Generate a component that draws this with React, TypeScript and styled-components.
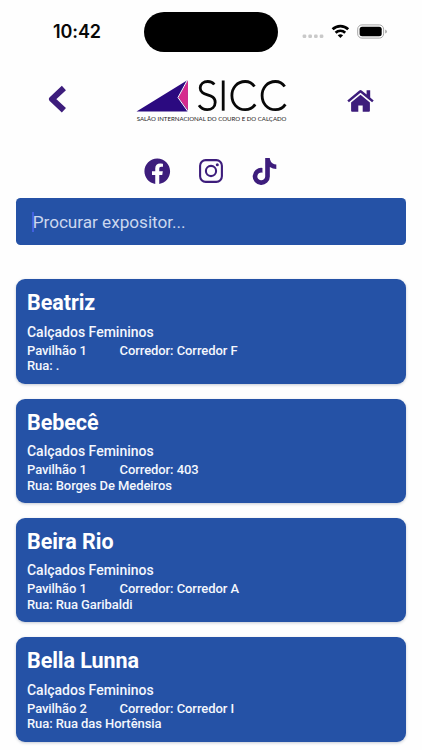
import React from "react";
import styled, { createGlobalStyle } from "styled-components";
import { FaFacebook, FaTiktok } from "react-icons/fa";

const GlobalStyle = createGlobalStyle`
  * { box-sizing: border-box; }
  body { margin: 0; background: #fefefe; overflow: hidden; }
`;

const Screen = styled.div`
  width: 422px;
  height: 750px;
  overflow: hidden;
  background: #fefefe;
  font-family: Roboto, "Liberation Sans", sans-serif;
`;

const StatusBar = styled.header`
  height: 64px;
  display: grid;
  grid-template-columns: 144px 134px 144px;
`;

const Clock = styled.time`
  padding: 21px 0 0 53px;
  font: 600 18px/22px Inter, sans-serif;
  letter-spacing: -0.1px;
  color: #080808;
`;

const Island = styled.div`
  height: 39.5px;
  margin-top: 12.4px;
  border-radius: 20px;
  background: #000;
`;

const StatusIcons = styled.svg`
  width: 144px;
  height: 64px;
  display: block;
`;

const Header = styled.nav`
  height: 72px;
  display: grid;
  grid-template-columns: 136px 152px 1fr;
`;

const NavButton = styled.button<{ $left: number; $top: number }>`
  border: 0;
  background: none;
  padding: ${(p) => p.$top}px 0 0 ${(p) => p.$left}px;
  color: #3d1d7c;
  display: flex;
  align-items: flex-start;
  svg { display: block; flex: none; }
`;

const Logo = styled.svg`
  width: 152px;
  height: 72px;
  display: block;
`;

const Socials = styled.div`
  height: 62.4px;
  padding-top: 21px;
  display: flex;
  justify-content: center;
  color: #3d1d7c;
  a { color: inherit; width: 53.5px; height: 28px; display: flex; align-items: center; justify-content: center; }
`;

const Search = styled.div`
  height: 46.3px;
  margin: 0 16.4px 34.5px 16.2px;
  border-radius: 4.5px;
  background: #2552a6;
  display: flex;
  align-items: center;
  padding-left: 16px;
`;

const Caret = styled.i`
  width: 2px;
  height: 20px;
  margin-right: -1.5px;
  background: #4160e0;
`;

const Placeholder = styled.span`
  font-size: 17.2px;
  line-height: 22px;
  letter-spacing: -0.03px;
  color: #cbd7ee;
`;

const List = styled.main`
  display: flex;
  flex-direction: column;
  gap: 15px;
  padding: 0 16.4px 0 16.2px;
`;

const Card = styled.article`
  height: 104.4px;
  flex: none;
  border-radius: 9px;
  background: #2552a6;
  color: #f4f7fd;
  padding: 11px 10.8px 0;
  box-shadow: 0 1px 3px rgba(30, 50, 90, 0.26);
`;

const Name = styled.h2`
  margin: 0 0 6.5px;
  font-size: 21.5px;
  line-height: 26px;
  font-weight: 700;
  letter-spacing: -0.05px;
  color: #fff;
`;

const Category = styled.p`
  margin: 0 0 2px;
  font-size: 14px;
  line-height: 18px;
  font-weight: 500;
`;

const Location = styled.div`
  display: grid;
  grid-template-columns: 92.5px 1fr;
  font-size: 13px;
  line-height: 15.5px;
  font-weight: 500;
  letter-spacing: -0.07px;
`;

const Street = styled.span`
  grid-column: 1 / -1;
`;

const exhibitors = [
  { name: "Beatriz", hall: 1, aisle: "Corredor F", street: "." },
  { name: "Bebecê", hall: 1, aisle: "403", street: "Borges De Medeiros" },
  { name: "Beira Rio", hall: 1, aisle: "Corredor A", street: "Rua Garibaldi" },
  { name: "Bella Lunna", hall: 2, aisle: "Corredor I", street: "Rua das Hortênsia" },
];

export default function App() {
  return (
    <Screen>
      <GlobalStyle />
      <StatusBar>
        <Clock>10:42</Clock>
        <Island />
        <StatusIcons viewBox="278 0 144 64">
          <g fill="#c9c9c9">
            {[304.4, 310.1, 315.8, 321.5].map((x) => (
              <rect key={x} x={x - 1.8} y="34.4" width="3.7" height="3.7" rx="1.3" />
            ))}
          </g>
          <g fill="none" stroke="#000" strokeWidth="2.7">
            <path d="M332.6 29.3a11.2 11.2 0 0 1 15.6 0" />
            <path d="M335.6 32.7a6.9 6.9 0 0 1 9.6 0" />
          </g>
          <path d="M337.7 35.2q2.7-2.1 5.4 0L340.4 38z" fill="#000" />
          <rect x="357.7" y="24.9" width="25.9" height="13.2" rx="4.2" fill="none" stroke="#a6a6a6" />
          <rect x="359.6" y="26.8" width="22.1" height="9.4" rx="2.5" fill="#000" />
          <path d="M385.2 29.4q1.8.7 1.8 2.1t-1.8 2.1z" fill="#a6a6a6" />
        </StatusIcons>
      </StatusBar>
      <Header>
        <NavButton $left={48} $top={21} aria-label="Voltar">
          <svg width="20" height="29" viewBox="0 0 20 29">
            <path d="M15.9 3 4 14.1l11.9 11.2" fill="none" stroke="currentColor" strokeWidth="6" strokeLinejoin="round" />
          </svg>
        </NavButton>
        <Logo viewBox="136 64 152 72">
          <path d="M136.5 111.5 187.7 80v31.5z" fill="#2b0a80" />
          <path d="M187.9 80v30.6L178.4 97.4z" fill="#d62a8e" />
          <path d="M187.5 80 178 97.5l10 14.2" fill="none" stroke="#fff" strokeWidth="1" />
          <g fill="none" stroke="#080808" strokeWidth="2.8">
            <path d="M214.3 84.5c-1.5-2-3.8-3-6.5-3-4.2 0-7.6 2.4-7.6 6.6 0 9 15 4.6 15 14.1 0 4.6-3.5 7.4-8 7.4-3.5 0-6.3-1.3-8.2-4.3" />
            <path d="M223.2 80.5v30.2" />
            <path d="M254.5 86.5c-2.2-3.3-5.5-5-9.3-5-8 0-13.3 6.2-13.3 14.1s5.3 14.1 13.3 14.1c4.2 0 7.7-1.9 10-5.3" />
            <path d="M284.7 86.5c-2.2-3.3-5.5-5-9.3-5-8 0-13.3 6.2-13.3 14.1s5.3 14.1 13.3 14.1c4.2 0 7.7-1.9 10-5.3" />
          </g>
          <text x="136.7" y="120.8" textLength="149.8" lengthAdjust="spacingAndGlyphs" fontFamily="Lato, sans-serif" fontSize="5.7" fill="#222">
            SALÃO INTERNACIONAL DO COURO E DO CALÇADO
          </text>
        </Logo>
        <NavButton $left={59} $top={26} aria-label="Início">
          <svg width="27" height="22" viewBox="0 0 27 22" fill="currentColor">
            <path d="M19.6.3h3.6v7.1l3.5 3-1.6 1.9L13.5 2.7 1.9 12.3.3 10.4 12 .7q1.5-1.2 3 0l4.6 3.8z" />
            <path d="M13.5 4.8 22.9 12.6v8.1q0 1-1 1h-6.2v-6.2h-4.4v6.2H5.1q-1 0-1-1v-8.1z" />
          </svg>
        </NavButton>
      </Header>
      <Socials>
        <a aria-label="Facebook"><FaFacebook size={26.5} /></a>
        <a aria-label="Instagram">
          <svg width="24" height="24" viewBox="0 0 24 24" fill="none" stroke="currentColor" strokeWidth="2.1">
            <rect x="1.1" y="1.1" width="21.8" height="21.8" rx="5.6" />
            <circle cx="12" cy="12" r="5.1" />
            <circle cx="18.3" cy="5.8" r="1.5" fill="currentColor" stroke="none" />
          </svg>
        </a>
        <a aria-label="TikTok"><FaTiktok size={27} /></a>
      </Socials>
      <Search>
        <Caret />
        <Placeholder>Procurar expositor...</Placeholder>
      </Search>
      <List>
        {exhibitors.map((e) => (
          <Card key={e.name}>
            <Name>{e.name}</Name>
            <Category>Calçados Femininos</Category>
            <Location>
              <span>Pavilhão {e.hall}</span>
              <span>Corredor: {e.aisle}</span>
              <Street>Rua: {e.street}</Street>
            </Location>
          </Card>
        ))}
      </List>
    </Screen>
  );
}
